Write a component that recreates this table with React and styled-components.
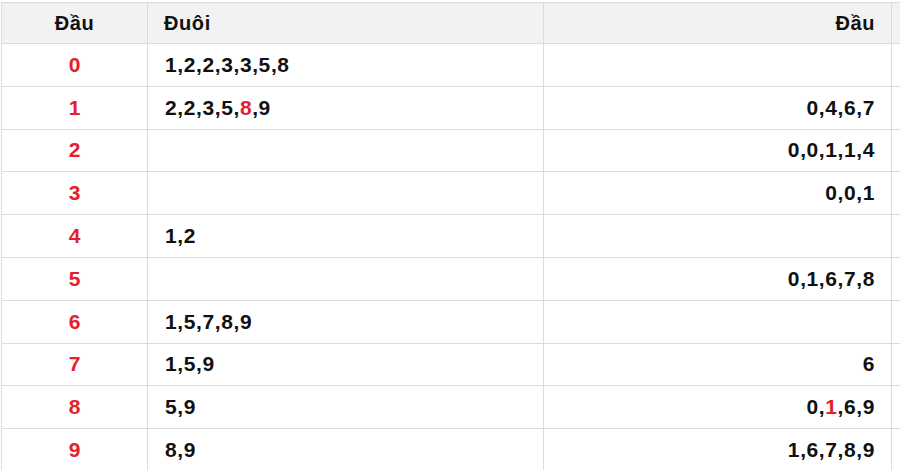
import React from 'react'
import styled, { createGlobalStyle } from 'styled-components'

const GlobalStyle = createGlobalStyle`
  html, body {
    margin: 0;
    padding: 0;
    background: #fff;
    overflow: hidden;
  }
  body {
    font-family: "Liberation Sans", Arial, sans-serif;
  }
`

// số đầu / đuôi, hl = vị trí tô đỏ
const rows = [
  { dau: 0, duoi: [1, 2, 2, 3, 3, 5, 8], dau2: [] },
  { dau: 1, duoi: [2, 2, 3, 5, 8, 9], duoiHl: 4, dau2: [0, 4, 6, 7] },
  { dau: 2, duoi: [], dau2: [0, 0, 1, 1, 4] },
  { dau: 3, duoi: [], dau2: [0, 0, 1] },
  { dau: 4, duoi: [1, 2], dau2: [] },
  { dau: 5, duoi: [], dau2: [0, 1, 6, 7, 8] },
  { dau: 6, duoi: [1, 5, 7, 8, 9], dau2: [] },
  { dau: 7, duoi: [1, 5, 9], dau2: [6] },
  { dau: 8, duoi: [5, 9], dau2: [0, 1, 6, 9], dau2Hl: 1 },
  { dau: 9, duoi: [8, 9], dau2: [1, 6, 7, 8, 9] },
]

function NumList({ items, hl }) {
  return items.map((n, i) => (
    <React.Fragment key={i}>
      {i > 0 && ','}
      {i === hl ? <Red>{n}</Red> : n}
    </React.Fragment>
  ))
}

export default function App() {
  return (
    <>
      <GlobalStyle />
      <Wrapper>
        <Table>
          <colgroup>
            <col style={{ width: 146 }} />
            <col style={{ width: 396 }} />
            <col style={{ width: 348 }} />
            <col style={{ width: 146 }} />
          </colgroup>
          <thead>
            <HeadRow>
              <Th align="center">Đầu</Th>
              <Th align="left">Đuôi</Th>
              <Th align="right">Đầu</Th>
              <Th align="center" />
            </HeadRow>
          </thead>
          <tbody>
            {rows.map((r) => (
              <Row key={r.dau}>
                <Td align="center">
                  <Red>{r.dau}</Red>
                </Td>
                <Td align="left">
                  <NumList items={r.duoi} hl={r.duoiHl} />
                </Td>
                <Td align="right">
                  <NumList items={r.dau2} hl={r.dau2Hl} />
                </Td>
                <Td align="center" />
              </Row>
            ))}
          </tbody>
        </Table>
      </Wrapper>
    </>
  )
}

const Wrapper = styled.div`
  padding: 2px 0 0 1px;
  width: 1100px;
`

const Table = styled.table`
  border-collapse: collapse;
  table-layout: fixed;
  width: 1036px;
`

const HeadRow = styled.tr`
  height: 41px;
  background: #f2f2f2;
`

const Row = styled.tr`
  height: 42.8px;
  background: #fff;
`

const Th = styled.th`
  border: 1px solid #dcdcdc;
  padding: 0 16px 0 16px;
  text-align: ${(p) => p.align};
  font-size: 20px;
  font-weight: 700;
  letter-spacing: 0.6px;
  color: #111;
  vertical-align: middle;
  white-space: nowrap;
`

const Td = styled.td`
  border: 1px solid #dcdcdc;
  padding: 0 16px 0 17px;
  text-align: ${(p) => p.align};
  font-size: 21px;
  font-weight: 700;
  letter-spacing: 0.6px;
  color: #111;
  vertical-align: middle;
  white-space: nowrap;
`

const Red = styled.span`
  color: #e5202a;
`
